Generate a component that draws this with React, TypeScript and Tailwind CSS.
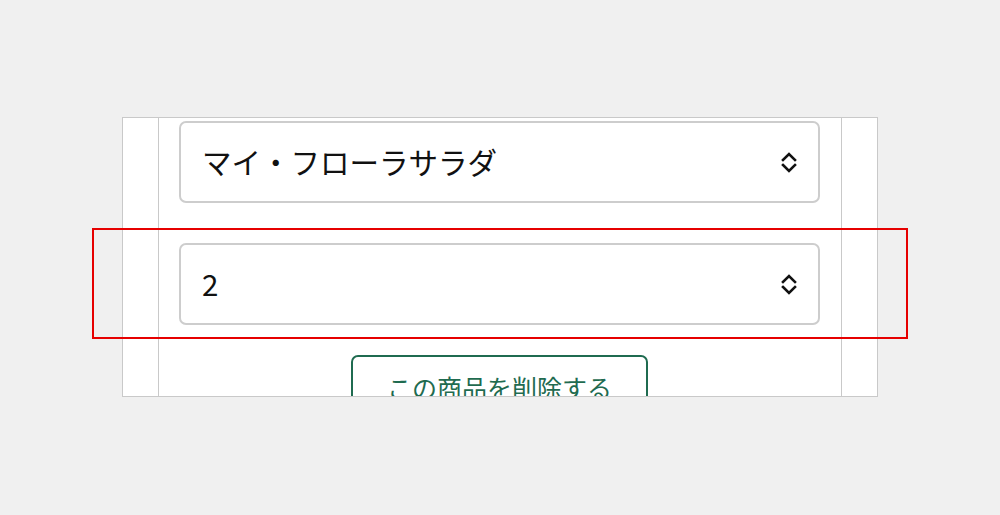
import React from "react";

function UpDown() {
  return (
    <svg width="16" height="24" viewBox="0 0 16 24" fill="none" stroke="#111" strokeWidth="2.6" strokeLinecap="square" strokeLinejoin="miter">
      <polyline points="2,10 8,4 14,10" />
      <polyline points="2,15 8,21 14,15" />
    </svg>
  );
}

function Select({ value }: { value: string }) {
  return (
    <div className="shrink-0 w-[641px] h-[82px] border-2 border-[#cdcdcd] rounded-[7px] bg-white flex items-center justify-between pl-[21px] pr-[21px]">
      <span className="text-[29.5px] leading-none text-[#111]">{value}</span>
      <UpDown />
    </div>
  );
}

export default function App() {
  return (
    <div
      className="relative w-[1000px] h-[515px] bg-[#f0f0f0] overflow-hidden"
      style={{ fontFamily: '"Noto Sans CJK JP", "Noto Sans", sans-serif' }}
    >
      <div className="pt-[117px] pl-[122px]">
        <div className="w-[756px] h-[280px] border border-[#c9c9c9] bg-white flex overflow-hidden">
          <div className="w-[36px] shrink-0 border-r border-[#c9c9c9]" />
          <div className="w-[683px] shrink-0 border-r border-[#c9c9c9] pt-[3px] pl-[20px] flex flex-col">
            <Select value="マイ・フローラサラダ" />
            <div className="h-[40px] shrink-0" />
            <Select value="2" />
            <div className="h-[30px] shrink-0" />
            <div className="w-[641px] shrink-0 flex justify-center">
              <div className="w-[297px] h-[70px] shrink-0 border-2 border-[#1f6b50] rounded-[7px] flex justify-center pt-[18px]">
                <span className="text-[25px] leading-none text-[#1f6b50]">この商品を削除する</span>
              </div>
            </div>
          </div>
          <div className="flex-1" />
        </div>
      </div>
      <div className="absolute left-[92px] top-[228px] w-[816px] h-[111px] border-2 border-[#e60000]" />
    </div>
  );
}
